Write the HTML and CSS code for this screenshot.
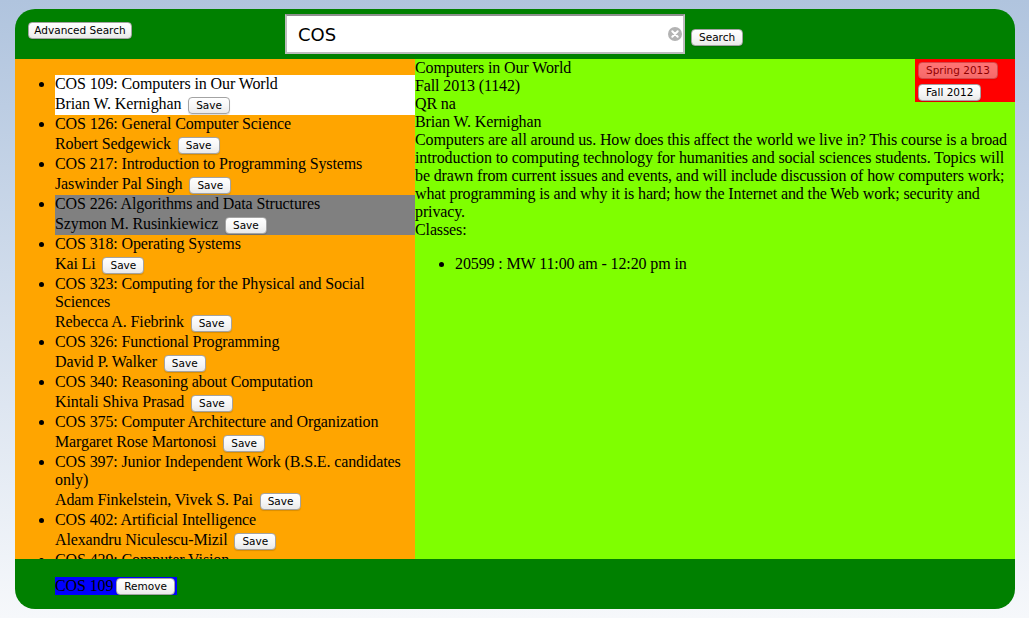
FILE: index.html
```html
<!DOCTYPE html>
<html>
<head>
<meta charset="utf-8">
<link rel="stylesheet" href="styles.css">
</head>
<body>
<div class="app">
  <div class="header">
    <button class="btn adv">Advanced Search</button>
    <div class="searchbox">
      <input class="search" type="text" value="COS">
      <svg class="clear" width="14" height="14" viewBox="0 0 14 14"><circle cx="7" cy="7" r="7" fill="#b3b3b3"/><path d="M4.3 4.3 L9.7 9.7 M9.7 4.3 L4.3 9.7" stroke="#fff" stroke-width="2" stroke-linecap="round"/></svg>
    </div>
    <button class="btn go">Search</button>
  </div>
  <div class="main">
    <div class="list">
      <ul class="courses">
        <li class="sel"><div class="title">COS 109: Computers in Our World</div><div class="prof">Brian W. Kernighan <button class="btn">Save</button></div></li>
        <li><div class="title">COS 126: General Computer Science</div><div class="prof">Robert Sedgewick <button class="btn">Save</button></div></li>
        <li><div class="title">COS 217: Introduction to Programming Systems</div><div class="prof">Jaswinder Pal Singh <button class="btn">Save</button></div></li>
        <li class="hov"><div class="title">COS 226: Algorithms and Data Structures</div><div class="prof">Szymon M. Rusinkiewicz <button class="btn">Save</button></div></li>
        <li><div class="title">COS 318: Operating Systems</div><div class="prof">Kai Li <button class="btn">Save</button></div></li>
        <li><div class="title">COS 323: Computing for the Physical and Social Sciences</div><div class="prof">Rebecca A. Fiebrink <button class="btn">Save</button></div></li>
        <li><div class="title">COS 326: Functional Programming</div><div class="prof">David P. Walker <button class="btn">Save</button></div></li>
        <li><div class="title">COS 340: Reasoning about Computation</div><div class="prof">Kintali Shiva Prasad <button class="btn">Save</button></div></li>
        <li><div class="title">COS 375: Computer Architecture and Organization</div><div class="prof">Margaret Rose Martonosi <button class="btn">Save</button></div></li>
        <li><div class="title">COS 397: Junior Independent Work (B.S.E. candidates only)</div><div class="prof">Adam Finkelstein, Vivek S. Pai <button class="btn">Save</button></div></li>
        <li><div class="title">COS 402: Artificial Intelligence</div><div class="prof">Alexandru Niculescu-Mizil <button class="btn">Save</button></div></li>
        <li><div class="title">COS 429: Computer Vision</div><div class="prof">Jianxiong Xiao <button class="btn">Save</button></div></li>
      </ul>
    </div>
    <div class="detail">
      <div class="terms">
        <button class="btn term dis">Spring 2013</button>
        <button class="btn term">Fall 2012</button>
      </div>
      <div class="line">Computers in Our World</div>
      <div class="line">Fall 2013 (1142)</div>
      <div class="line">QR na</div>
      <div class="line">Brian W. Kernighan</div>
      <div class="line">Computers are all around us. How does this affect the world we live in? This course is a broad introduction to computing technology for humanities and social sciences students. Topics will be drawn from current issues and events, and will include discussion of how computers work; what programming is and why it is hard; how the Internet and the Web work; security and privacy.</div>
      <div class="line">Classes:</div>
      <ul class="classes">
        <li>20599 : MW 11:00 am - 12:20 pm in</li>
      </ul>
    </div>
  </div>
  <div class="footer">
    <span class="saved">COS 109 <button class="btn rm">Remove</button></span>
  </div>
</div>
</body>
</html>
```

FILE: styles.css
```css
html, body {
  margin: 0;
  padding: 0;
  height: 100%;
}
body {
  background: linear-gradient(to bottom, #b0c4de 0%, #f6f8fb 100%);
  font-family: "Liberation Serif", "Times New Roman", serif;
  font-size: 16px;
  line-height: 18px;
  letter-spacing: -0.12px;
  color: #000;
}
.app {
  margin: 9px 0 0 15px;
  width: 1000px;
  height: 600px;
  background: #008000;
  border-radius: 20px;
  overflow: hidden;
  display: flex;
  flex-direction: column;
}
.btn {
  font-family: "DejaVu Sans", "Lucida Grande", sans-serif;
  font-size: 10.5px;
  letter-spacing: 0;
  line-height: 15px;
  height: 17px;
  padding: 0 7px;
  margin: 0;
  white-space: nowrap;
  color: #000;
  background: linear-gradient(to bottom, #ffffff 0%, #f6f6f6 55%, #e9e9e9 100%);
  border: 1px solid #a3a3a3;
  border-radius: 4px;
  box-shadow: 0 1px 1px rgba(0, 0, 0, 0.15);
  vertical-align: middle;
}
.header {
  height: 50px;
  flex: none;
  display: flex;
  align-items: flex-start;
  padding: 5px 0 0 13px;
  box-sizing: border-box;
}
.adv {
  margin-top: 8px;
  width: 104px;
  padding: 0;
  text-align: center;
}
.searchbox {
  position: relative;
  margin-left: 153px;
  width: 400px;
  height: 40px;
}
.search {
  width: 400px;
  height: 40px;
  box-sizing: border-box;
  border: 2px solid #bdbdbd;
  border-top-color: #8f8f8f;
  background: #fff;
  font-family: "DejaVu Sans", "Lucida Grande", sans-serif;
  font-size: 18px;
  padding: 0 30px 0 11px;
  margin: 0;
  outline: none;
  color: #000;
}
.clear {
  position: absolute;
  left: 383px;
  top: 13px;
}
.go {
  margin-left: 6px;
  margin-top: 15px;
}
.main {
  display: flex;
  height: 500px;
  flex: none;
}
.list {
  width: 400px;
  height: 500px;
  overflow: hidden;
  background: #ffa500;
  flex: none;
}
.courses {
  margin: 16px 0;
  padding-left: 40px;
}
.courses li.sel {
  background: #fff;
}
.courses li.hov {
  background: #808080;
}
.prof {
  line-height: 22px;
  height: 22px;
  white-space: nowrap;
}
.prof .btn {
  margin-left: 3px;
}
.detail {
  width: 600px;
  height: 500px;
  background: #7fff00;
  flex: none;
}
.terms {
  float: right;
  width: 100px;
  height: 43px;
  box-sizing: border-box;
  background: #ff0000;
  padding: 3px 0 0 3px;
  display: flex;
  flex-direction: column;
  align-items: flex-start;
  gap: 5px;
}
.term.dis {
  opacity: 0.45;
}
.classes {
  margin: 16px 0;
  padding-left: 40px;
}
.footer {
  flex: 1;
  padding: 18px 0 0 40px;
}
.saved {
  background: #0000ff;
  display: inline-flex;
  align-items: center;
  gap: 3px;
  line-height: 18px;
  padding-right: 2px;
  white-space: nowrap;
}
```
